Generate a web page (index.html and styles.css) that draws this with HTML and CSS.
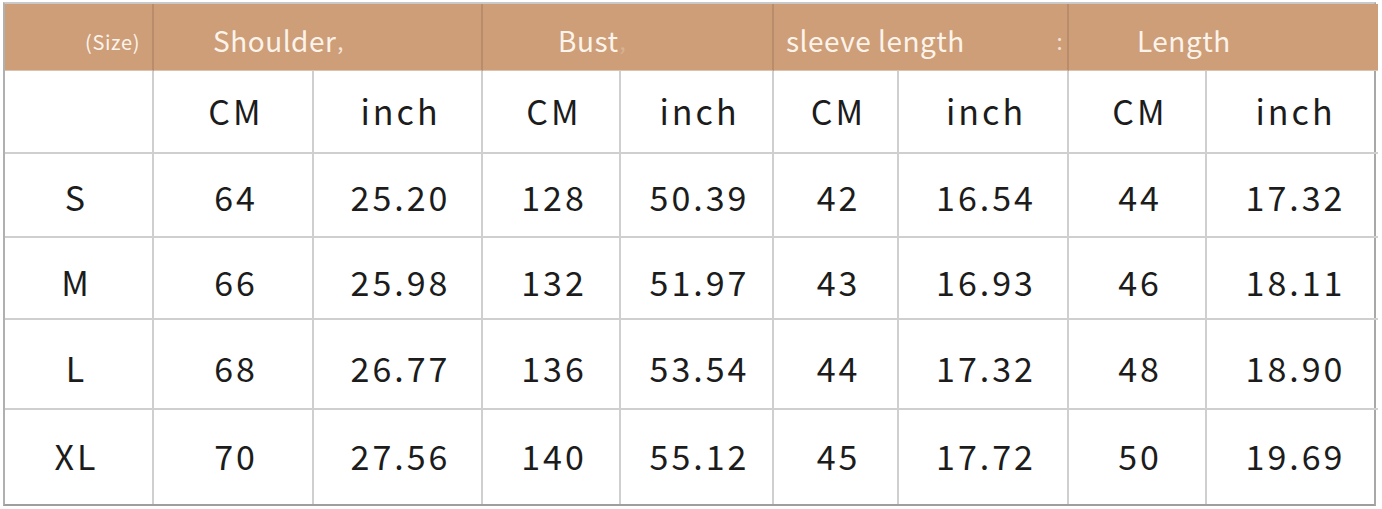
FILE: index.html
```html
<!DOCTYPE html>
<html>
<head>
<meta charset="utf-8">
<link rel="stylesheet" href="styles.css">
</head>
<body>
<div class="chart">
  <div class="hd hd-size"><span class="size-label">(Size)</span></div>
  <div class="hd hd-shoulder"><span>Shoulder</span><span class="tick">,</span></div>
  <div class="hd hd-bust"><span>Bust</span><span class="tick faint">,</span></div>
  <div class="hd hd-sleeve"><span>sleeve length</span><span class="colon">:</span></div>
  <div class="hd hd-length"><span>Length</span></div>

  <div class="c first sub"></div>
  <div class="c sub">CM</div><div class="c sub">inch</div>
  <div class="c sub">CM</div><div class="c sub">inch</div>
  <div class="c sub">CM</div><div class="c sub">inch</div>
  <div class="c sub">CM</div><div class="c sub">inch</div>

  <div class="c first r1">S</div>
  <div class="c r1">64</div><div class="c r1">25.20</div>
  <div class="c r1">128</div><div class="c r1">50.39</div>
  <div class="c r1">42</div><div class="c r1">16.54</div>
  <div class="c r1">44</div><div class="c r1">17.32</div>

  <div class="c first r2">M</div>
  <div class="c r2">66</div><div class="c r2">25.98</div>
  <div class="c r2">132</div><div class="c r2">51.97</div>
  <div class="c r2">43</div><div class="c r2">16.93</div>
  <div class="c r2">46</div><div class="c r2">18.11</div>

  <div class="c first r3">L</div>
  <div class="c r3">68</div><div class="c r3">26.77</div>
  <div class="c r3">136</div><div class="c r3">53.54</div>
  <div class="c r3">44</div><div class="c r3">17.32</div>
  <div class="c r3">48</div><div class="c r3">18.90</div>

  <div class="c first r4">XL</div>
  <div class="c r4">70</div><div class="c r4">27.56</div>
  <div class="c r4">140</div><div class="c r4">55.12</div>
  <div class="c r4">45</div><div class="c r4">17.72</div>
  <div class="c r4">50</div><div class="c r4">19.69</div>
</div>
</body>
</html>
```

FILE: styles.css
```css
* { box-sizing: border-box; }
html, body { margin: 0; padding: 0; background: #ffffff; }
body { padding: 2px 0 0 3px; }

.chart {
  width: 1373px;
  display: grid;
  grid-template-columns: 149px 160px 169px 138px 153px 125px 170px 138px 171px;
  grid-template-rows: 67px 83px 84px 82px 90px 94px;
  border-top: 2px solid #c9c9c9;
  border-left: 2px solid #b0b0b0;
  border-bottom: 2px solid #9e9e9e;
  border-right: 2px solid #a8a8a8;
  font-family: "Noto Sans CJK SC", "Noto Sans", sans-serif;
}

.hd {
  background: #cd9e78;
  color: #fcf3ea;
  display: flex;
  align-items: center;
  padding-top: 6px;
  font-size: 28px;
  letter-spacing: 0.5px;
  border-right: 2px solid #b98d6b;
  border-bottom: 1px solid #d9c2b0;
}
.hd-size { justify-content: flex-end; padding-right: 12px; }
.size-label { font-size: 20px; letter-spacing: 0.6px; padding-top: 2px; }
.hd-shoulder { grid-column: span 2; padding-left: 59px; }
.hd-bust { grid-column: span 2; padding-left: 75px; }
.hd-sleeve { grid-column: span 2; padding-left: 12px; padding-right: 4px; justify-content: space-between; }
.hd-length { grid-column: span 2; padding-left: 68px; border-right: none; }
.tick { font-size: 22px; opacity: 0.85; margin-left: 1px; }
.faint { opacity: 0.25; }
.colon { font-size: 22px; opacity: 0.8; }

.c {
  display: flex;
  align-items: center;
  justify-content: center;
  color: #1c1c1c;
  font-size: 34px;
  font-weight: 400;
  letter-spacing: 3px;
  padding-left: 6px;
  border-right: 2px solid #cfcfcf;
  border-bottom: 2px solid #cfcfcf;
}
.c.first { padding-left: 0; padding-right: 4px; }
.c:nth-child(9n+5) { border-right: none; }
.sub { padding-bottom: 2px; }
.r1 { padding-top: 2px; }
.r2 { padding-top: 6px; }
.r3 { padding-top: 6px; }
.r4 { padding-bottom: 4px; border-bottom: none; }
```
